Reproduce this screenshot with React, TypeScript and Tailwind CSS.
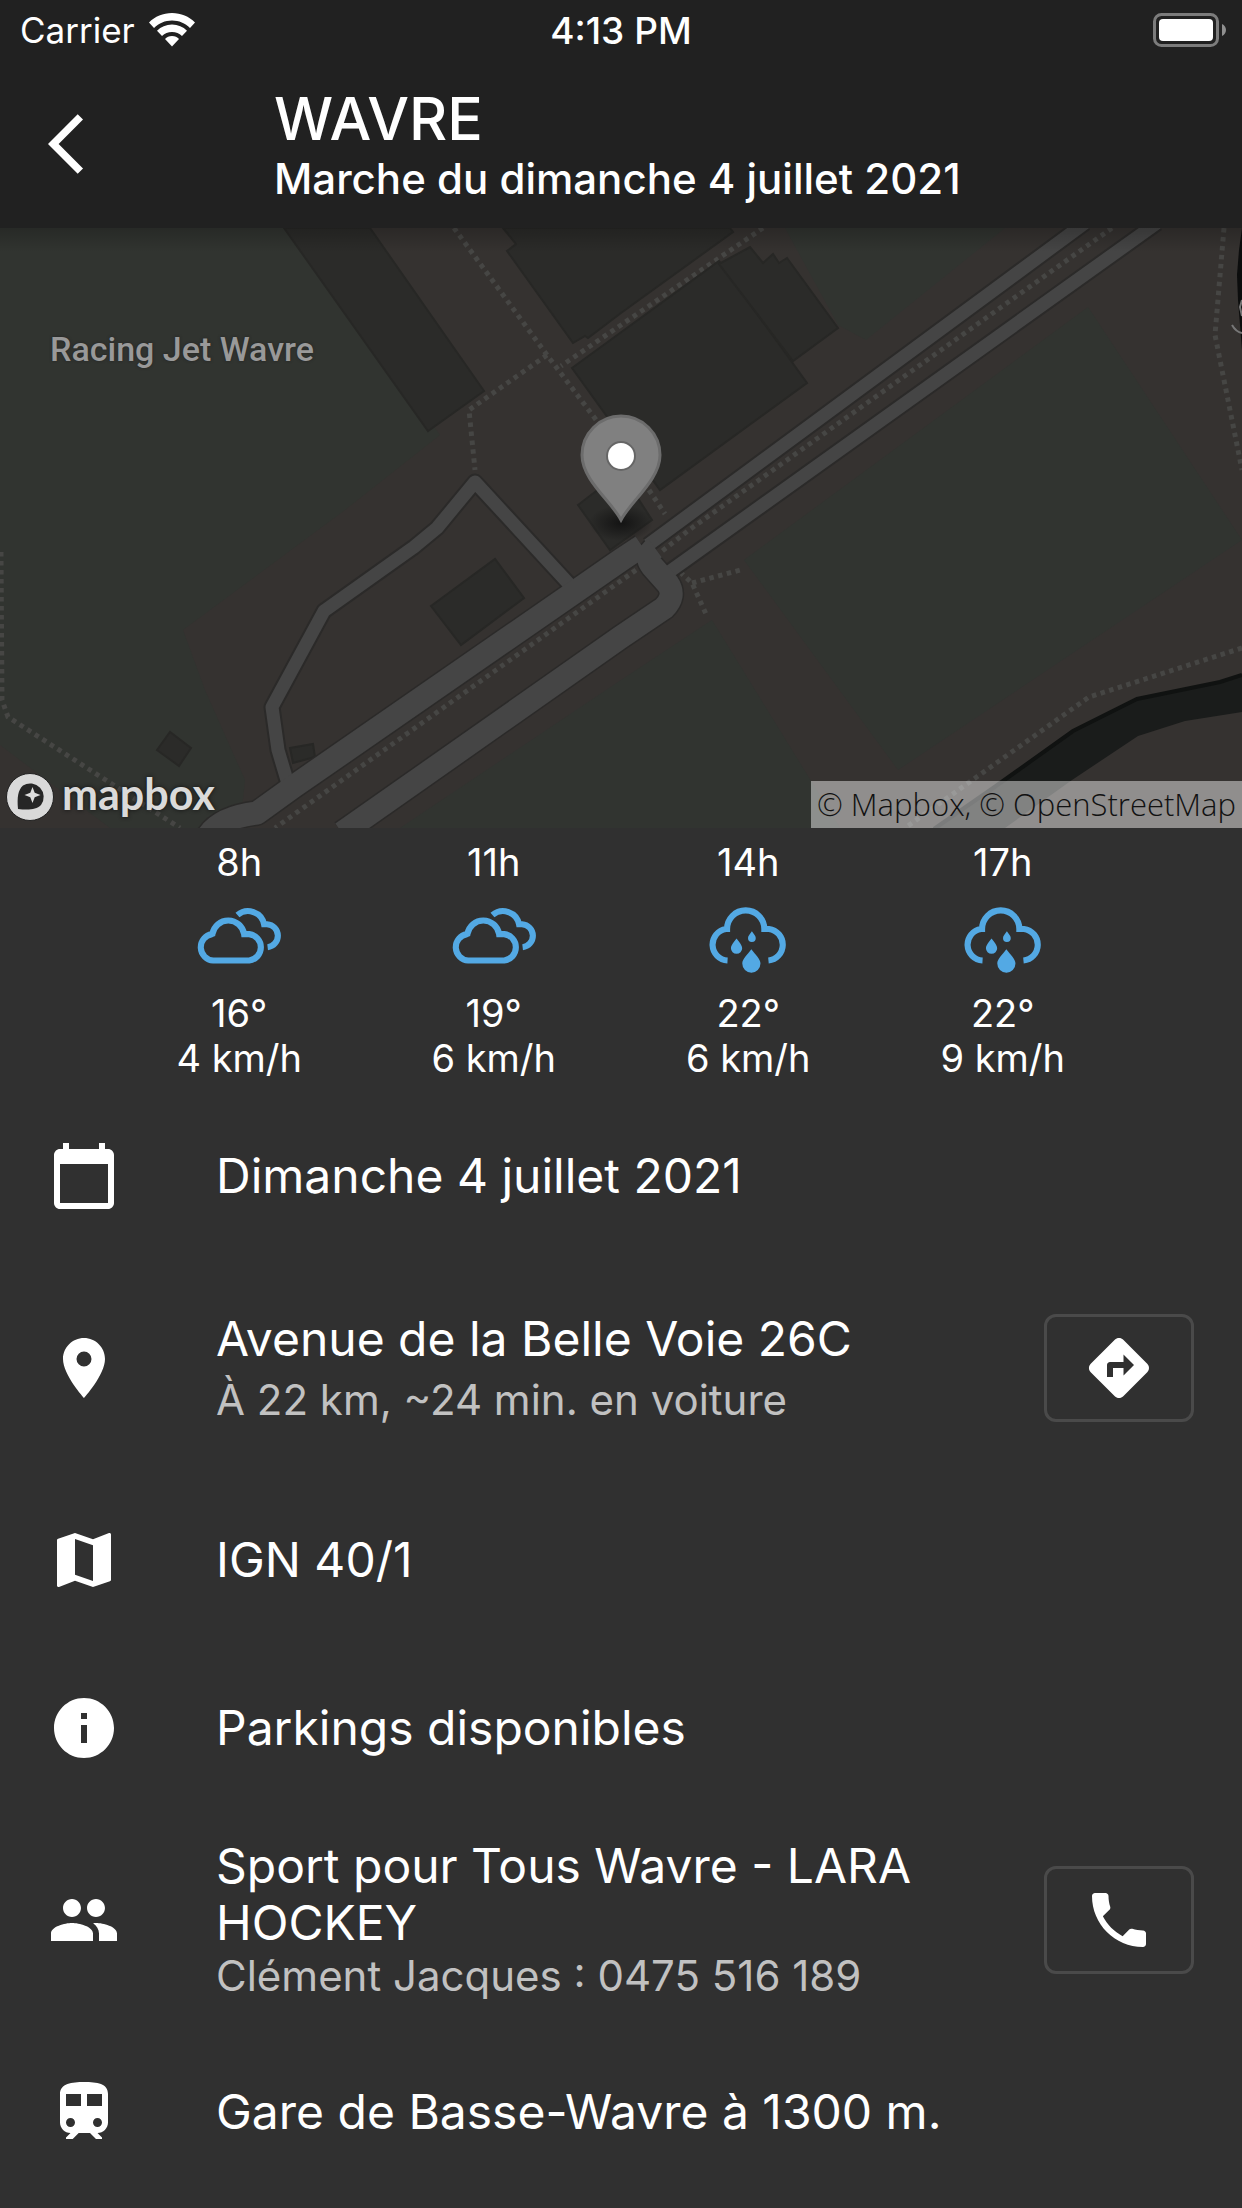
import React from "react";
import {
  MdArrowBackIos,
  MdDirections,
  MdInfo,
  MdLocationOn,
  MdMap,
  MdPeople,
  MdPhone,
  MdTrain,
} from "react-icons/md";

type IconComponent = React.ComponentType<{ className?: string }>;

type Forecast = { hour: string; sky: "cloudy" | "rain"; temp: string; wind: string };

const forecasts: Forecast[] = [
  { hour: "8h", sky: "cloudy", temp: "16°", wind: "4 km/h" },
  { hour: "11h", sky: "cloudy", temp: "19°", wind: "6 km/h" },
  { hour: "14h", sky: "rain", temp: "22°", wind: "6 km/h" },
  { hour: "17h", sky: "rain", temp: "22°", wind: "9 km/h" },
];

function StatusBar() {
  return (
    <div className="grid h-[60px] grid-cols-3 items-center px-5 text-[35px] leading-none">
      <div className="flex items-center gap-3.5">
        <span>Carrier</span>
        <svg viewBox="0 0 46 34" className="h-[34px] w-[46px]" fill="white" aria-label="Wi-Fi">
          <path d="M23 0C14 0 6 3.500 0 9.500L5 15C10 10.200 16 7.500 23 7.500S36 10.200 41 15L46 9.500C40 3.500 32 0 23 0Z" />
          <path d="M23 11.500C17 11.500 12 13.800 8 17.700L13 23C15.700 20.500 19 19 23 19S30.300 20.500 33 23L38 17.700C34 13.800 29 11.500 23 11.500Z" />
          <path d="M23 23C20 23 17.700 24.200 16 26L23 33.500L30 26C28.300 24.200 26 23 23 23Z" />
        </svg>
      </div>
      <span className="text-center text-[37px] font-medium">4:13 PM</span>
      <svg viewBox="0 0 74 34" className="mr-[-5px] h-[34px] w-[74px] justify-self-end" aria-label="Batterie">
        <rect x="1.500" y="1.500" width="63" height="31" rx="7" fill="none" stroke="#7c7c7c" strokeWidth="3" />
        <rect x="6" y="6" width="54" height="22" rx="4" fill="white" />
        <path d="M69 11C71.500 12 73 14.500 73 17S71.500 22 69 23Z" fill="#8f8f8f" />
      </svg>
    </div>
  );
}

function CalendarIcon({ className }: { className?: string }) {
  return (
    <svg viewBox="0 0 24 24" className={className} fill="currentColor" aria-hidden="true">
      <path d="M20 3h-1V1h-2v2H7V1H5v2H4c-1.100 0-2 .9-2 2v16c0 1.100.9 2 2 2h16c1.100 0 2-.9 2-2V5c0-1.100-.9-2-2-2zm0 18H4V8h16v13z" />
    </svg>
  );
}

function CloudyIcon() {
  return (
    <svg viewBox="0 0 90 90" className="size-[92px]" fill="none" stroke="#53a9e4" strokeWidth="6" aria-hidden="true">
      <path d="M19.800 67A13 13 0 0 1 18.500 41.200L19 41A15.700 15.700 0 0 1 50 41.200H55A13 13 0 0 1 55 67Z" />
      <path d="M43.500 22.500A16 16 0 0 1 69.500 31.500H72.500A11.300 11.300 0 0 1 73 54" />
    </svg>
  );
}

function RainIcon() {
  return (
    <svg viewBox="0 0 90 90" className="size-[92px]" fill="none" stroke="#53a9e4" strokeWidth="6" aria-hidden="true">
      <path d="M25 67A15.500 15.500 0 0 1 23.500 36.200H24.500A18 18 0 0 1 61 36.200H65.500A15.500 15.500 0 0 1 65 67" />
      <g fill="#53a9e4" stroke="none">
        <path d="M33.800 45.500C36.300 49 39.300 52 39.300 55A5.500 5.500 0 0 1 28.300 55C28.300 52 31.300 49 33.800 45.500Z" />
        <path d="M48.800 38.500C50.300 41 52.600 43 52.600 45A3.800 3.800 0 0 1 45 45C45 43 47.300 41 48.800 38.500Z" />
        <path d="M48.300 56C52.300 61.500 57.200 65.500 57.200 70A8.900 8.900 0 0 1 39.400 70C39.400 65.500 44.300 61.500 48.300 56Z" />
      </g>
    </svg>
  );
}

function MapDrawing() {
  const sideRoad = "M569 584L475 482L437 528L414 547L324 611L272 707L278 750L289 787";
  const narrow = "M1085 223L648 545M1157 223L669 572";
  const wide =
    "M205 842Q215 818 257 813L293 787L621 560L642 546M655 548Q644 556 652 566L668 584Q676 596 664 608L621 637L342 833";
  return (
    <svg
      viewBox="0 228 1242 600"
      preserveAspectRatio="xMidYMid slice"
      className="block h-full w-full"
      role="img"
      aria-label="Carte de Wavre"
    >
      <defs>
        <radialGradient id="pin-shadow">
          <stop offset="0" stopColor="#111" stopOpacity="0.9" />
          <stop offset="1" stopColor="#111" stopOpacity="0" />
        </radialGradient>
        <linearGradient id="bar-shadow" x1="0" y1="0" x2="0" y2="1">
          <stop offset="0" stopColor="#000" stopOpacity="0.2" />
          <stop offset="1" stopColor="#000" stopOpacity="0" />
        </linearGradient>
      </defs>
      <rect y="228" width="1242" height="600" fill="#353230" />
      <g fill="#313430">
        <path d="M0 228H290L440 435L345 510L183 630L205 690L245 780L240 828H110L0 745Z" />
        <path d="M785 228H1005L866 340L838 325Z" />
        <path d="M1088 307L1242 540L898 770L744 560Z" />
        <path d="M712 620L840 828H400L621 680Z" />
      </g>
      <g fill="none" stroke="#464644" strokeWidth="5" strokeDasharray="4.500 4.500">
        <path d="M454 228L547 355L600 425M649 490L665 514" />
        <path d="M763 228L561 366" />
        <path d="M547 355L469 410L475 470" />
        <path d="M1112 228L689 530L661 552" />
        <path d="M636 570L275 828" />
        <path d="M1224 228L1215 335L1242 470" />
        <path d="M680 572L692 583L706 614M692 583L744 569" />
        <path d="M1242 648L1089 697L905 828" />
        <path d="M1 552L2 700L8 717L180 828" />
      </g>
      <g fill="#2b2b29" stroke="#272725" strokeWidth="2">
        <path d="M284 228L428 431L484 391L370 228Z" />
        <path d="M503 228L516 244L507 251L573 343L585 336L588 338L621 313L733 232L730 228Z" />
        <path d="M572 368L719 261L807 383L660 490Z" />
        <path d="M719 264L750 247L763 263L773 254L779 263L787 258L838 328L793 361Z" />
        <path d="M578 505L621 472L652 520L610 550Z" />
        <path d="M431 606L495 559L524 598L461 645Z" />
        <path d="M157 750L170 732L191 748L179 766Z" />
        <path d="M290 748L313 744L315 757L293 763Z" />
      </g>
      <path
        d="M1242 674L1220 681L1137 698L1073 730L996 785L934 828H1005L1072 780L1138 736L1185 721L1242 712Z"
        fill="#1a1c1b"
      />
      <path d="M1242 675L1220 682L1137 699L1073 731L996 786L934 829" fill="none" stroke="#101211" strokeWidth="4" />
      <path d="M1242 228L1239 250L1237 275L1238 300L1242 350Z" fill="#0c0d0d" />
      <path d="M1232 325Q1236 332 1242 333M1242 300L1240 307L1242 316" fill="none" stroke="#777" strokeWidth="2" />
      <g fill="none" strokeLinejoin="round">
        <g stroke="#2b2a29">
          <path d={sideRoad} strokeWidth="17" />
          <path d={narrow} strokeWidth="17" />
          <path d={wide} strokeWidth="26" />
        </g>
        <g stroke="#454545">
          <path d={sideRoad} strokeWidth="13" />
          <path d={narrow} strokeWidth="13" />
          <path d={wide} strokeWidth="23" />
        </g>
      </g>
      <ellipse cx="621" cy="523" rx="32" ry="18" fill="url(#pin-shadow)" />
      <path
        d="M621 520C612 502 582 480 582 455A39 39 0 0 1 660 455C660 480 630 502 621 520Z"
        fill="#808080"
        stroke="#6c6c6c"
        strokeWidth="3"
      />
      <circle cx="621" cy="456" r="14" fill="white" stroke="#666" strokeWidth="2" />
      <rect y="228" width="1242" height="24" fill="url(#bar-shadow)" />
    </svg>
  );
}

function MapPanel() {
  return (
    <section className="relative h-[600px] overflow-hidden">
      <MapDrawing />
      <span className="absolute top-[101px] left-[50px] font-['Roboto',sans-serif] text-[34px] leading-10 font-medium text-[#999] [text-shadow:0_0_3px_#222]">
        Racing Jet Wavre
      </span>
      <a
        href="#mapbox"
        className="absolute bottom-1 left-1.5 flex items-center gap-2 font-['Lato',sans-serif] text-[43px] leading-[48px] font-bold text-[#dadada] [text-shadow:0_0_4px_#111]"
      >
        <svg viewBox="0 0 48 48" className="size-12" aria-hidden="true">
          <circle cx="24" cy="24" r="23.500" fill="#d9d9d9" stroke="#222" strokeWidth="1" />
          <path d="M12 36C11 24 12 17 17 12.500A13.500 13.500 0 0 1 35 32C30 37 22 37 12 36Z" fill="#262626" />
          <path d="M26.500 14L28.700 19.800L34.500 22L28.700 24.200L26.500 30L24.300 24.200L18.500 22L24.300 19.800Z" fill="#dedede" />
        </svg>
        <span className="pb-1.5">mapbox</span>
      </a>
      <p className="absolute right-0 bottom-0 bg-white/45 px-1.5 font-['Open_Sans',sans-serif] text-[31px] leading-[47px] font-light whitespace-nowrap text-[#111]">
        © Mapbox, © OpenStreetMap
      </p>
    </section>
  );
}

type RowProps = {
  icon: IconComponent;
  title: string;
  subtitle?: string;
  action?: { icon: IconComponent; label: string };
  compact?: boolean;
};

function Row({ icon: Icon, title, subtitle, action, compact }: RowProps) {
  const ActionIcon = action?.icon;
  return (
    <li className={subtitle ? "flex h-[216px] items-center px-12" : "flex h-[168px] items-center px-12"}>
      <Icon className="size-[72px] shrink-0" />
      <div className="ml-24 min-w-0 flex-1 pb-0.5">
        <p className="text-[48px] leading-[57px]">{title}</p>
        {subtitle && (
          <p className={compact ? "text-[42px] leading-[50px] text-[#c1c1c1]" : "mt-2 text-[42px] leading-[50px] text-[#c1c1c1]"}>
            {subtitle}
          </p>
        )}
      </div>
      {ActionIcon && (
        <button
          type="button"
          aria-label={action.label}
          className="ml-12 flex h-[108px] w-[150px] shrink-0 items-center justify-center rounded-xl border-3 border-[#4a4a4a]"
        >
          <ActionIcon className="size-[72px]" />
        </button>
      )}
    </li>
  );
}

export default function App() {
  return (
    <div className="min-h-screen bg-[#303030] font-['Inter',sans-serif] text-white">
      <header className="bg-[#212121]">
        <StatusBar />
        <div className="flex h-[168px] items-center pl-12">
          <button type="button" aria-label="Retour" className="flex w-[226px]">
            <MdArrowBackIos className="size-[72px]" />
          </button>
          <div>
            <h1 className="text-[59px] leading-[70px] font-medium">WAVRE</h1>
            <p className="text-[42px] leading-[50px] font-medium">Marche du dimanche 4 juillet 2021</p>
          </div>
        </div>
      </header>
      <main>
        <MapPanel />
        <section className="grid h-[264px] grid-cols-4 px-28 pt-3 text-center text-[38px] leading-[45px]">
          {forecasts.map((f) => (
            <div key={f.hour} className="flex flex-col items-center">
              <span>{f.hour}</span>
              <div className="my-[7px]">{f.sky === "cloudy" ? <CloudyIcon /> : <RainIcon />}</div>
              <span>{f.temp}</span>
              <span>{f.wind}</span>
            </div>
          ))}
        </section>
        <ul>
          <Row icon={CalendarIcon} title="Dimanche 4 juillet 2021" />
          <Row
            icon={MdLocationOn}
            title="Avenue de la Belle Voie 26C"
            subtitle="À 22 km, ~24 min. en voiture"
            action={{ icon: MdDirections, label: "Itinéraire" }}
          />
          <Row icon={MdMap} title="IGN 40/1" />
          <Row icon={MdInfo} title="Parkings disponibles" />
          <Row
            icon={MdPeople}
            title="Sport pour Tous Wavre - LARA HOCKEY"
            subtitle="Clément Jacques : 0475 516 189"
            action={{ icon: MdPhone, label: "Appeler" }}
            compact
          />
          <Row icon={MdTrain} title="Gare de Basse-Wavre à 1300 m." />
        </ul>
      </main>
    </div>
  );
}
